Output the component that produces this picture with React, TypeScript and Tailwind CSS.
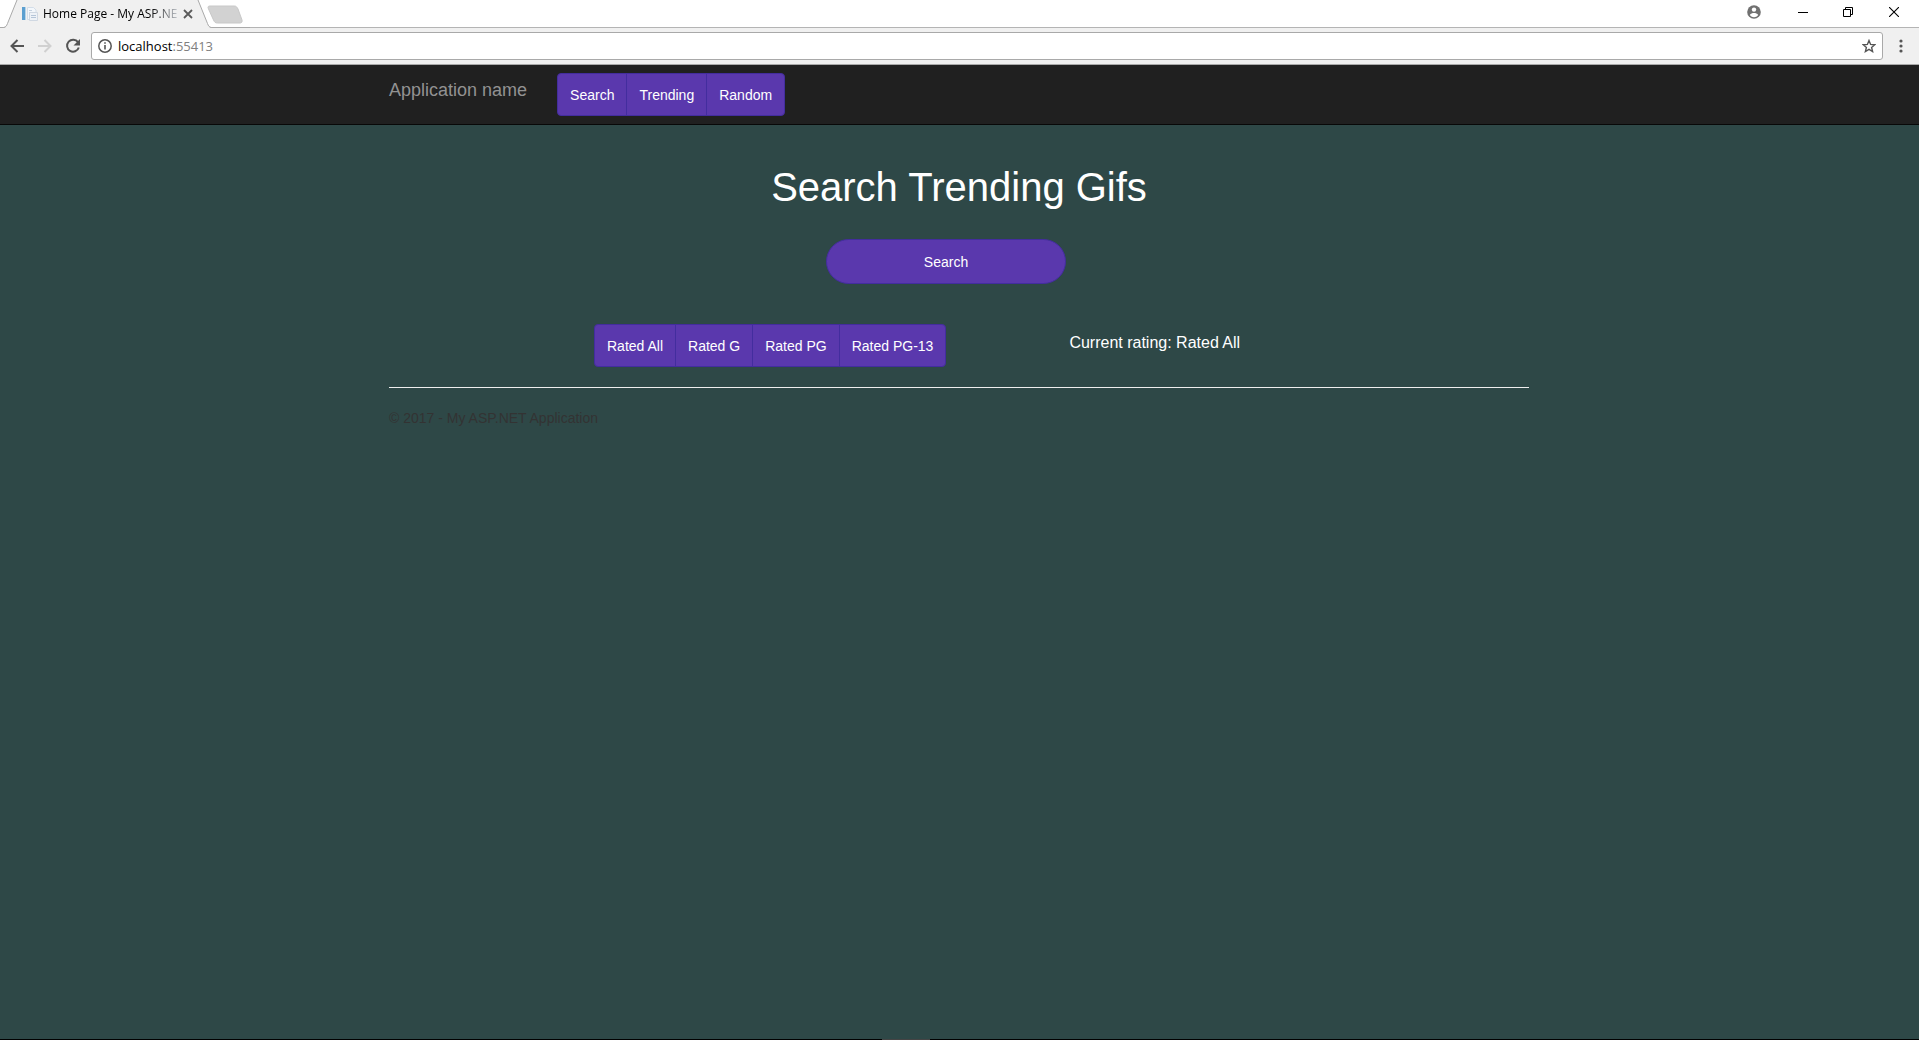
import React from "react";

const purple = "bg-[#5a38ad] border-[#432d9e] text-white";

function ButtonGroup({ labels, name }: { labels: string[]; name: string }) {
  return (
    <div role="group" aria-label={name} className="flex">
      {labels.map((label) => (
        <button
          key={label}
          type="button"
          className={`${purple} -ml-px h-[43px] border px-3 text-sm first:ml-0 first:rounded-l last:rounded-r`}
        >
          {label}
        </button>
      ))}
    </div>
  );
}

function Favicon() {
  return (
    <svg width="16" height="16" viewBox="0 0 16 16" className="shrink-0" aria-hidden="true">
      <path d="M5.500 1.500h6l2.500 2.500v9.500H5.500z" fill="#f3f7fb" stroke="#d3dde8" />
      <path d="M7 4.500h3M7 6.500h5" stroke="#c3d0df" />
      <path d="M7.500 6.500h8v8h-8z" fill="#eef2f7" stroke="#d0d8e2" />
      <path d="M9 9.500h5M9 11.500h5" stroke="#b5c5d8" />
      <path d="M0 1h4v13H0z" fill="#5b9fd0" />
      <path d="M3 1h1v13H3z" fill="#b5d3e9" />
    </svg>
  );
}

function TabStrip() {
  return (
    <div className="relative flex h-7 items-start justify-between border-b border-[#b4b4b4] bg-white">
      <div className="relative h-7 w-[250px]">
        <svg width="250" height="28" viewBox="0 0 250 28" className="absolute inset-0" aria-hidden="true">
          <path d="M3.500 28C6 27.500 6.500 26 7.500 23.500L17 0H198L207.500 23.500C208.500 26 209 27.500 211.500 28Z" fill="#f0f0f0" />
          <path d="M0 27.500H3.500C6 27 6.500 26 7.500 23.500L17 0M198 0L207.500 23.500C208.500 26 209 27 211.500 27.500H250" fill="none" stroke="#a9a9a9" />
          <path d="M219 6H234.500C236 6 237 7 238 9L242 20C242.500 22 241.500 23 240 23H217.500C215 23 214.500 22 213.500 20L208.500 9C207.500 7 208 6 210 6Z" fill="#d2d2d2" stroke="#c8c8c8" />
        </svg>
        <div className="relative flex h-7 items-center pl-[22px]">
          <Favicon />
          <span className="ml-[5px] w-[136px] bg-linear-to-r from-black from-75% to-gray-300 bg-clip-text font-['Open_Sans',sans-serif] text-[12px] whitespace-nowrap text-transparent">
            Home Page - My ASP.NE
          </span>
          <button type="button" aria-label="Close tab" className="ml-1">
            <svg width="10" height="10" viewBox="0 0 10 10">
              <path d="M1 1l8 8M9 1l-8 8" stroke="#5a5a5a" strokeWidth="1.800" />
            </svg>
          </button>
        </div>
      </div>
      <div className="flex h-6 items-center text-black">
        <button type="button" aria-label="Profile" className="mr-[37px]">
          <svg width="14" height="14" viewBox="0 0 14 14">
            <circle cx="7" cy="7" r="6.800" fill="#707070" />
            <circle cx="7" cy="4.600" r="2.200" fill="#fff" />
            <path d="M2.800 10C3.500 8.500 5.500 8 7 8s3.500.5 4.200 2C10 11.500 8.600 12.200 7 12.200S4 11.500 2.800 10z" fill="#fff" />
          </svg>
        </button>
        <button type="button" aria-label="Minimize" className="mr-[35px]">
          <svg width="10" height="10" viewBox="0 0 10 10"><path d="M0 5.500h10" stroke="currentColor" /></svg>
        </button>
        <button type="button" aria-label="Restore" className="mr-9">
          <svg width="10" height="10" viewBox="0 0 10 10">
            <path d="M.5 2.500h7v7h-7zM2.500 2.500v-2h7v7h-2" fill="none" stroke="currentColor" />
          </svg>
        </button>
        <button type="button" aria-label="Close" className="mr-5">
          <svg width="10" height="10" viewBox="0 0 10 10"><path d="M0 0l10 10M10 0L0 10" stroke="currentColor" strokeWidth="1.100" /></svg>
        </button>
      </div>
    </div>
  );
}

function Toolbar() {
  return (
    <div className="flex h-[37px] items-center border-b border-[#a9a9a9] bg-[#f0f0f0] pl-[10px] text-[#555]">
      <button type="button" aria-label="Back" className="mr-[14px]">
        <svg width="14" height="14" viewBox="0 0 14 14"><path d="M14 7H2M7.500 1L1.500 7l6 6" fill="none" stroke="currentColor" strokeWidth="2" /></svg>
      </button>
      <button type="button" aria-label="Forward" className="mr-[13px] text-[#d0d0d0]">
        <svg width="14" height="14" viewBox="0 0 14 14"><path d="M0 7h12M6.500 1l6 6-6 6" fill="none" stroke="currentColor" strokeWidth="2" /></svg>
      </button>
      <button type="button" aria-label="Reload" className="mr-[10px]">
        <svg width="16" height="16" viewBox="0 0 16 16">
          <path d="M13 4.200A6 6 0 1 0 13.800 9.500" fill="none" stroke="currentColor" strokeWidth="2" />
          <path d="M15 1v6.500H8.500z" fill="currentColor" />
        </svg>
      </button>
      <div className="flex h-7 flex-1 items-center rounded-[3px] border border-[#a9a9a9] bg-white pr-[6px] pl-[6px]">
        <svg width="14" height="14" viewBox="0 0 14 14" className="shrink-0" aria-hidden="true">
          <circle cx="7" cy="7" r="6.200" fill="none" stroke="currentColor" strokeWidth="1.500" />
          <path d="M7 6v4.500M7 3.300v1.500" stroke="currentColor" strokeWidth="1.600" />
        </svg>
        <a href="#" className="ml-[6px] flex-1 pt-px font-['Open_Sans',sans-serif] text-[13px] text-black">
          localhost<span className="text-[#808080]">:55413</span>
        </a>
        <button type="button" aria-label="Bookmark this page">
          <svg width="14" height="14" viewBox="0 0 14 14">
            <path d="M7 1.500l1.600 3.900 4.200.3-3.200 2.700 1 4.100L7 10.300l-3.600 2.200 1-4.100L1.200 5.700l4.200-.3z" fill="none" stroke="currentColor" strokeWidth="1.400" />
          </svg>
        </button>
      </div>
      <button type="button" aria-label="Menu" className="mr-4 ml-4">
        <svg width="4" height="14" viewBox="0 0 4 14" fill="currentColor">
          <circle cx="2" cy="2" r="1.600" />
          <circle cx="2" cy="7" r="1.600" />
          <circle cx="2" cy="12" r="1.600" />
        </svg>
      </button>
    </div>
  );
}

export default function App() {
  return (
    <div className="flex min-h-screen flex-col bg-[#2e4847] font-['Liberation_Sans',Arial,sans-serif]">
      <TabStrip />
      <Toolbar />
      <nav className="border-b border-[#080808] bg-[#202020]">
        <div className="mx-auto flex h-[59px] max-w-[1171px] items-start pr-4 pl-[15px]">
          <a href="#" className="mt-[15px] mr-[30px] text-[18px] leading-5 text-[#929292]">
            Application name
          </a>
          <div className="mt-2">
            <ButtonGroup name="Sections" labels={["Search", "Trending", "Random"]} />
          </div>
        </div>
      </nav>
      <main className="mx-auto w-full max-w-[1171px] pr-4 pl-[15px]">
        <h1 className="mt-10 text-center text-[40px] leading-11 text-white">Search Trending Gifs</h1>
        <div className="mt-[30px] flex justify-center pr-[26px]">
          <button type="button" className={`${purple} h-[45px] w-60 rounded-full border text-sm`}>
            Search
          </button>
        </div>
        <div className="mt-10 flex items-start pl-[205px]">
          <ButtonGroup name="Rating" labels={["Rated All", "Rated G", "Rated PG", "Rated PG-13"]} />
          <p className="mt-2 ml-[123px] text-base leading-[22px] text-white">Current rating: Rated All</p>
        </div>
        <hr className="mt-5 h-px border-0 bg-[#eee]" />
        <footer className="mt-5 text-sm text-[#333]">© 2017 - My ASP.NET Application</footer>
      </main>
      <div className="mt-auto flex h-px justify-center bg-black pr-[108px]">
        <div className="w-12 bg-[#444]" />
      </div>
    </div>
  );
}
